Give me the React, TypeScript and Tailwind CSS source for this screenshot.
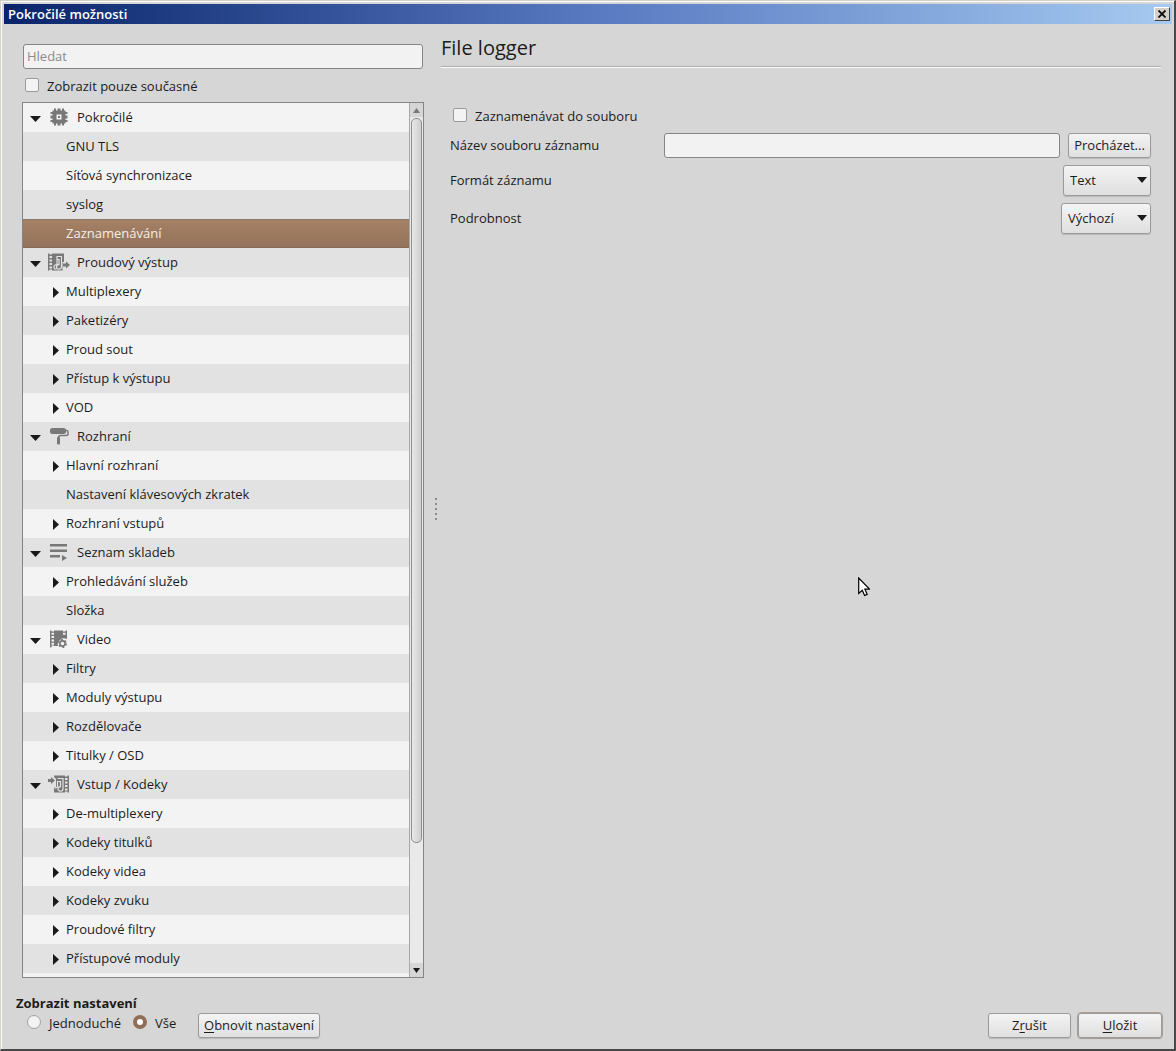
import { useState } from 'react';
import type { ReactNode } from 'react';
import clsx from 'clsx';

type Row = {
  label: string;
  icon?: ReactNode;
  leaf?: boolean;
};

const iconClass = 'w-[22px] h-[18px] shrink-0 fill-[#787878]';

const ChipIcon = () => (
  <svg className={iconClass} viewBox="0 0 22 18">
    <path
      fillRule="evenodd"
      d="M4.500 2.500H6V.5h2v2h1.500v-2h3v2H14v-2h2v2h1.500V4h2v2h-2v1.500h2v3h-2V12h2v2h-2v1.500H16v2h-2v-2h-1.500v2h-3v-2H8v2H6v-2H4.500V14h-2v-2h2v-1.500h-2v-3h2V6h-2V4h2zM8.500 6.500v5h5v-5z"
    />
    <path d="M10 8h2v2h-2z" />
  </svg>
);

const StreamOutIcon = () => (
  <svg className={iconClass} viewBox="0 0 22 18">
    <path
      fillRule="evenodd"
      d="M0 .5h1.500v1H4v-1h12V9h-1.500v8.500H4v-1H1.500v1H0zM1.500 3v2H4V3zm0 3.500v2H4v-2zm0 3.500v2H4v-2zm0 3.500v2H4v-2z"
    />
    <path d="M9 3.500h4.500V14a2.500 2.200 0 1 1-2.500-2.300V6.500H9zM9 3.500v8q-3 .2-3 2.500t2.500 2" fill="none" stroke="#e2e2e2" strokeWidth="1.200" />
    <path d="M15 10.500h3V8.500l4 3.500-4 3.500v-2h-3z" />
  </svg>
);

const RollerIcon = () => (
  <svg className={iconClass} viewBox="0 0 22 18">
    <rect x="2" y="1" width="16" height="6" rx="2.500" />
    <path d="M17 3.500h1.500Q20 3.500 20 5v2q0 1.500-2 1.500h-5q-2.500 0-2.500 2" fill="none" stroke="#787878" strokeWidth="1.500" />
    <rect x="9" y="10" width="3" height="7.500" rx="1" />
  </svg>
);

const PlaylistIcon = () => (
  <svg className={iconClass} viewBox="0 0 22 18">
    <path d="M2 1h17v2.500H2zM2 6.500h17V9H2zM2 12h10v2.500H2zM14 12l5 3-5 3z" />
  </svg>
);

const VideoIcon = () => (
  <svg className={iconClass} viewBox="0 0 22 18">
    <path
      fillRule="evenodd"
      d="M2 .5h1.500v1H6v-1h9v1h2.500v-1H19V9q-5-2-7.500 1.500Q9 13 10 16H6v-.5H3.500v2H2zM3.500 2.800v2H6v-2zm0 3.300v2H6v-2zm0 3.400v2H6v-2zm0 3.300v2H6v-2zM15 2.800v2h2.500v-2z"
    />
    <circle cx="14.500" cy="13.500" r="2.600" fill="none" stroke="#787878" strokeWidth="1.600" />
    <circle cx="14.500" cy="13.500" r="3.800" fill="none" stroke="#787878" strokeWidth="1.400" strokeDasharray="1.990 1.990" />
  </svg>
);

const InputIcon = () => (
  <svg className={iconClass} viewBox="0 0 22 18">
    <path d="M0 4h3V2l4 3.500L3 9V7H0z" />
    <path
      fillRule="evenodd"
      d="M6 .5h11v1h2.500v-1H21v17h-1.500v-1H17v1H6V13l2-1V4L6 2zM17 3v2h2.500V3zm0 3.500v2h2.500v-2zm0 3.500v2h2.500v-2zm0 3.500v2h2.500v-2z"
    />
    <path d="M9.500 3.500H15V14a2.500 2.200 0 1 1-2.500-2.300V6.500H9.500V12q-2 .2-2 2" fill="none" stroke="#e2e2e2" strokeWidth="1.200" />
  </svg>
);

const rows: Row[] = [
  { label: 'Pokročilé', icon: <ChipIcon /> },
  { label: 'GNU TLS', leaf: true },
  { label: 'Síťová synchronizace', leaf: true },
  { label: 'syslog', leaf: true },
  { label: 'Zaznamenávání', leaf: true },
  { label: 'Proudový výstup', icon: <StreamOutIcon /> },
  { label: 'Multiplexery' },
  { label: 'Paketizéry' },
  { label: 'Proud sout' },
  { label: 'Přístup k výstupu' },
  { label: 'VOD' },
  { label: 'Rozhraní', icon: <RollerIcon /> },
  { label: 'Hlavní rozhraní' },
  { label: 'Nastavení klávesových zkratek', leaf: true },
  { label: 'Rozhraní vstupů' },
  { label: 'Seznam skladeb', icon: <PlaylistIcon /> },
  { label: 'Prohledávání služeb' },
  { label: 'Složka', leaf: true },
  { label: 'Video', icon: <VideoIcon /> },
  { label: 'Filtry' },
  { label: 'Moduly výstupu' },
  { label: 'Rozdělovače' },
  { label: 'Titulky / OSD' },
  { label: 'Vstup / Kodeky', icon: <InputIcon /> },
  { label: 'De-multiplexery' },
  { label: 'Kodeky titulků' },
  { label: 'Kodeky videa' },
  { label: 'Kodeky zvuku' },
  { label: 'Proudové filtry' },
  { label: 'Přístupové moduly' },
];

const buttonClass =
  'h-[25px] pb-[2px] rounded-[3px] border border-[#9b9b9b] bg-linear-to-b from-[#f4f4f4] to-[#dfdfdf] shadow-[0_1px_1px_#b8b8b8] text-center whitespace-nowrap';
const inputClass =
  'h-[25px] min-w-0 pb-[2px] rounded-[3px] border border-[#858585] bg-[#f2f2f2] px-[3px] outline-none placeholder:text-[#8a8a8a] placeholder:opacity-100';
const checkClass =
  'appearance-none size-[14px] mb-[2px] shrink-0 rounded-[2px] border border-[#9a9a9a] bg-[#f3f3f3] checked:bg-[#997559]';
const radioClass =
  'appearance-none size-[14px] mb-[2px] shrink-0 rounded-full border border-[#a3a3a3] bg-[#f3f3f3] checked:border-4 checked:border-[#8f6f57] checked:bg-white';

const TreeRow = ({ row, selected, onSelect }: { row: Row; selected: boolean; onSelect: () => void }) => (
  <li className="odd:bg-[#f3f3f3] even:bg-[#e2e2e2]">
    <button
      type="button"
      onClick={onSelect}
      className={clsx(
        'flex items-center w-full h-[29px] pb-[2px] text-left',
        row.icon ? 'pl-[7px]' : 'pl-[29px]',
        selected && 'bg-linear-to-b from-[#a58165] to-[#93735b] border-y border-t-[#8b7769] border-b-[#866b57] text-[#f5ede6]'
      )}
    >
      {row.icon ? (
        <>
          <svg className="w-[11px] h-[6px] mr-[7px] mt-1 shrink-0" viewBox="0 0 11 6">
            <path d="M0 0h11L5.500 6z" fill="#1a1a1a" />
          </svg>
          {row.icon}
          <span className="ml-[7px]">{row.label}</span>
        </>
      ) : (
        <>
          <span className="w-[14px] pl-px pt-1 shrink-0">
            {!row.leaf && (
              <svg className="w-[6px] h-[11px]" viewBox="0 0 6 11">
                <path d="M0 0l6 5.500L0 11z" fill="#1a1a1a" />
              </svg>
            )}
          </span>
          <span>{row.label}</span>
        </>
      )}
    </button>
  </li>
);

const Dropdown = ({ id, options, className }: { id: string; options: string[]; className: string }) => (
  <div className={clsx('relative', className)}>
    <select
      id={id}
      className="appearance-none w-full h-[31px] pl-[6px] pb-[2px] rounded-[3px] border border-[#9b9b9b] bg-linear-to-b from-[#f4f4f4] to-[#dfdfdf] shadow-[0_1px_1px_#b8b8b8]"
    >
      {options.map((option) => (
        <option key={option}>{option}</option>
      ))}
    </select>
    <svg className="absolute right-1 top-3 w-[10px] h-[6px] pointer-events-none" viewBox="0 0 10 6">
      <path d="M0 0h10L5 6z" fill="#1a1a1a" />
    </svg>
  </div>
);

export default function App() {
  const [selected, setSelected] = useState('Zaznamenávání');

  return (
    <div className="relative flex flex-col h-screen overflow-hidden border-t border-l border-r-2 border-b-2 border-t-[#d4d0c8] border-l-[#d4d0c8] border-r-[#484848] border-b-[#484848] bg-[#d6d6d6] font-['Open_Sans','Noto_Sans',sans-serif] text-[13px] leading-[18px] text-[#1c1c1c]">
      <div className="flex flex-col flex-1 min-h-0 border-t border-l border-white">
        {/* Title bar */}
        <header className="flex items-center justify-between h-5 mt-[2px] mx-[2px] pl-1 pr-[2px] bg-linear-to-r from-[#0a246a] via-[#5878c0] to-[#a6caf0]">
          <h1 className="font-semibold text-white">Pokročilé možnosti</h1>
          <button
            type="button"
            aria-label="Zavřít"
            className="flex items-center justify-center w-4 h-[14px] border border-t-white border-l-white border-r-[#404040] border-b-[#404040] bg-[#d4d0c8]"
          >
            <svg className="w-2 h-2" viewBox="0 0 8 8">
              <path d="M.5.5l7 7M7.500.5l-7 7" stroke="#000" strokeWidth="1.700" />
            </svg>
          </button>
        </header>

        <main className="flex flex-1 min-h-0 pl-5 pr-[13px]">
          {/* Settings tree */}
          <aside className="flex flex-col w-[402px] pt-5 shrink-0">
            <input type="text" placeholder="Hledat" aria-label="Hledat" className={clsx(inputClass, 'mx-px')} />
            <label className="flex items-center gap-2 h-[33px] pl-[3px] pt-px">
              <input type="checkbox" className={checkClass} />
              Zobrazit pouze současné
            </label>
            <div className="flex flex-1 min-h-0 border border-[#858585]">
              <ul className="flex-1 overflow-y-auto [scrollbar-width:none] bg-[#f3f3f3]">
                {rows.map((row) => (
                  <TreeRow
                    key={row.label}
                    row={row}
                    selected={row.label === selected}
                    onSelect={() => setSelected(row.label)}
                  />
                ))}
              </ul>
              <div className="flex flex-col w-[14px] border-l border-[#a8a8a8] bg-[#e9e9e9]">
                <div className="flex items-center justify-center h-[14px] bg-[#d6d6d6]">
                  <svg className="w-[7px] h-[5px]" viewBox="0 0 7 5">
                    <path d="M0 5h7L3.500 0z" fill="#777" />
                  </svg>
                </div>
                <div className="flex flex-col flex-1 pt-px px-px">
                  <div className="flex-6 rounded-[5px] border border-[#8f8f8f] bg-linear-to-r from-[#e8e8e8] to-[#cfcfcf]" />
                  <div className="flex-1" />
                </div>
                <div className="flex items-center justify-center h-[14px] bg-[#d6d6d6]">
                  <svg className="w-[7px] h-[5px]" viewBox="0 0 7 5">
                    <path d="M0 0h7L3.500 5z" fill="#1a1a1a" />
                  </svg>
                </div>
              </div>
            </div>
          </aside>

          {/* Splitter handle */}
          <div className="flex flex-col items-end justify-center gap-[3px] w-[13px] mr-1 pt-4 shrink-0">
            {[0, 1, 2, 3, 4].map((dot) => (
              <span key={dot} className="size-[2px] bg-[#8c8c8c]" />
            ))}
          </div>

          {/* Module options */}
          <section className="flex-1 min-w-0 pt-3">
            <h2 className="pb-[6px] text-[20px] leading-6">File logger</h2>
            <hr className="border-t border-b border-t-[#acacac] border-b-white" />
            <form className="mt-[39px] pl-[9px] pr-[10px]" onSubmit={(event) => event.preventDefault()}>
              <label className="flex items-center gap-2 pl-[3px]">
                <input type="checkbox" className={checkClass} />
                Zaznamenávat do souboru
              </label>
              <div className="flex items-center mt-2">
                <label htmlFor="log-file" className="w-[214px] pb-[2px] shrink-0">
                  Název souboru záznamu
                </label>
                <input id="log-file" type="text" className={clsx(inputClass, 'flex-1 mr-2')} />
                <button type="button" className={clsx(buttonClass, 'w-[83px]')}>
                  Procházet...
                </button>
              </div>
              <div className="flex items-center justify-between mt-[7px]">
                <label htmlFor="log-format" className="pb-[2px]">
                  Formát záznamu
                </label>
                <Dropdown id="log-format" options={['Text', 'HTML']} className="w-[88px]" />
              </div>
              <div className="flex items-center justify-between mt-[7px]">
                <label htmlFor="log-verbosity" className="pb-[2px]">
                  Podrobnost
                </label>
                <Dropdown id="log-verbosity" options={['Výchozí', 'Info', 'Chyba', 'Varování', 'Ladění']} className="w-[90px]" />
              </div>
            </form>
          </section>
        </main>

        {/* Footer */}
        <footer className="flex items-end justify-between pt-4 pb-[11px] pl-[14px] pr-3">
          <div className="flex items-end">
            <fieldset className="w-[182px]">
              <legend className="font-bold">Zobrazit nastavení</legend>
              <div className="flex items-center h-[22px] mb-1 pl-[11px]">
                <label className="flex items-center gap-2 w-[106px]">
                  <input type="radio" name="level" className={radioClass} />
                  Jednoduché
                </label>
                <label className="flex items-center gap-2">
                  <input type="radio" name="level" defaultChecked className={radioClass} />
                  Vše
                </label>
              </div>
            </fieldset>
            <button type="button" className={clsx(buttonClass, 'w-[122px]')}>
              <span className="underline underline-offset-2">O</span>bnovit nastavení
            </button>
          </div>
          <div className="flex gap-[7px]">
            <button type="button" className={clsx(buttonClass, 'w-[83px]')}>
              Z<span className="underline underline-offset-2">r</span>ušit
            </button>
            <button type="button" className={clsx(buttonClass, 'w-[84px] outline outline-[#a99f98]')}>
              <span className="underline underline-offset-2">U</span>ložit
            </button>
          </div>
        </footer>
      </div>

      {/* Mouse pointer */}
      <svg className="absolute left-[857px] top-[576px] w-3 h-5 pointer-events-none" viewBox="0 0 12 20">
        <path
          d="M.7 1v15.500l3.600-3.300 2.300 5.300 2.600-1.100-2.300-5.200h4.600z"
          fill="#fff"
          stroke="#000"
          strokeWidth="1.200"
        />
      </svg>
    </div>
  );
}
